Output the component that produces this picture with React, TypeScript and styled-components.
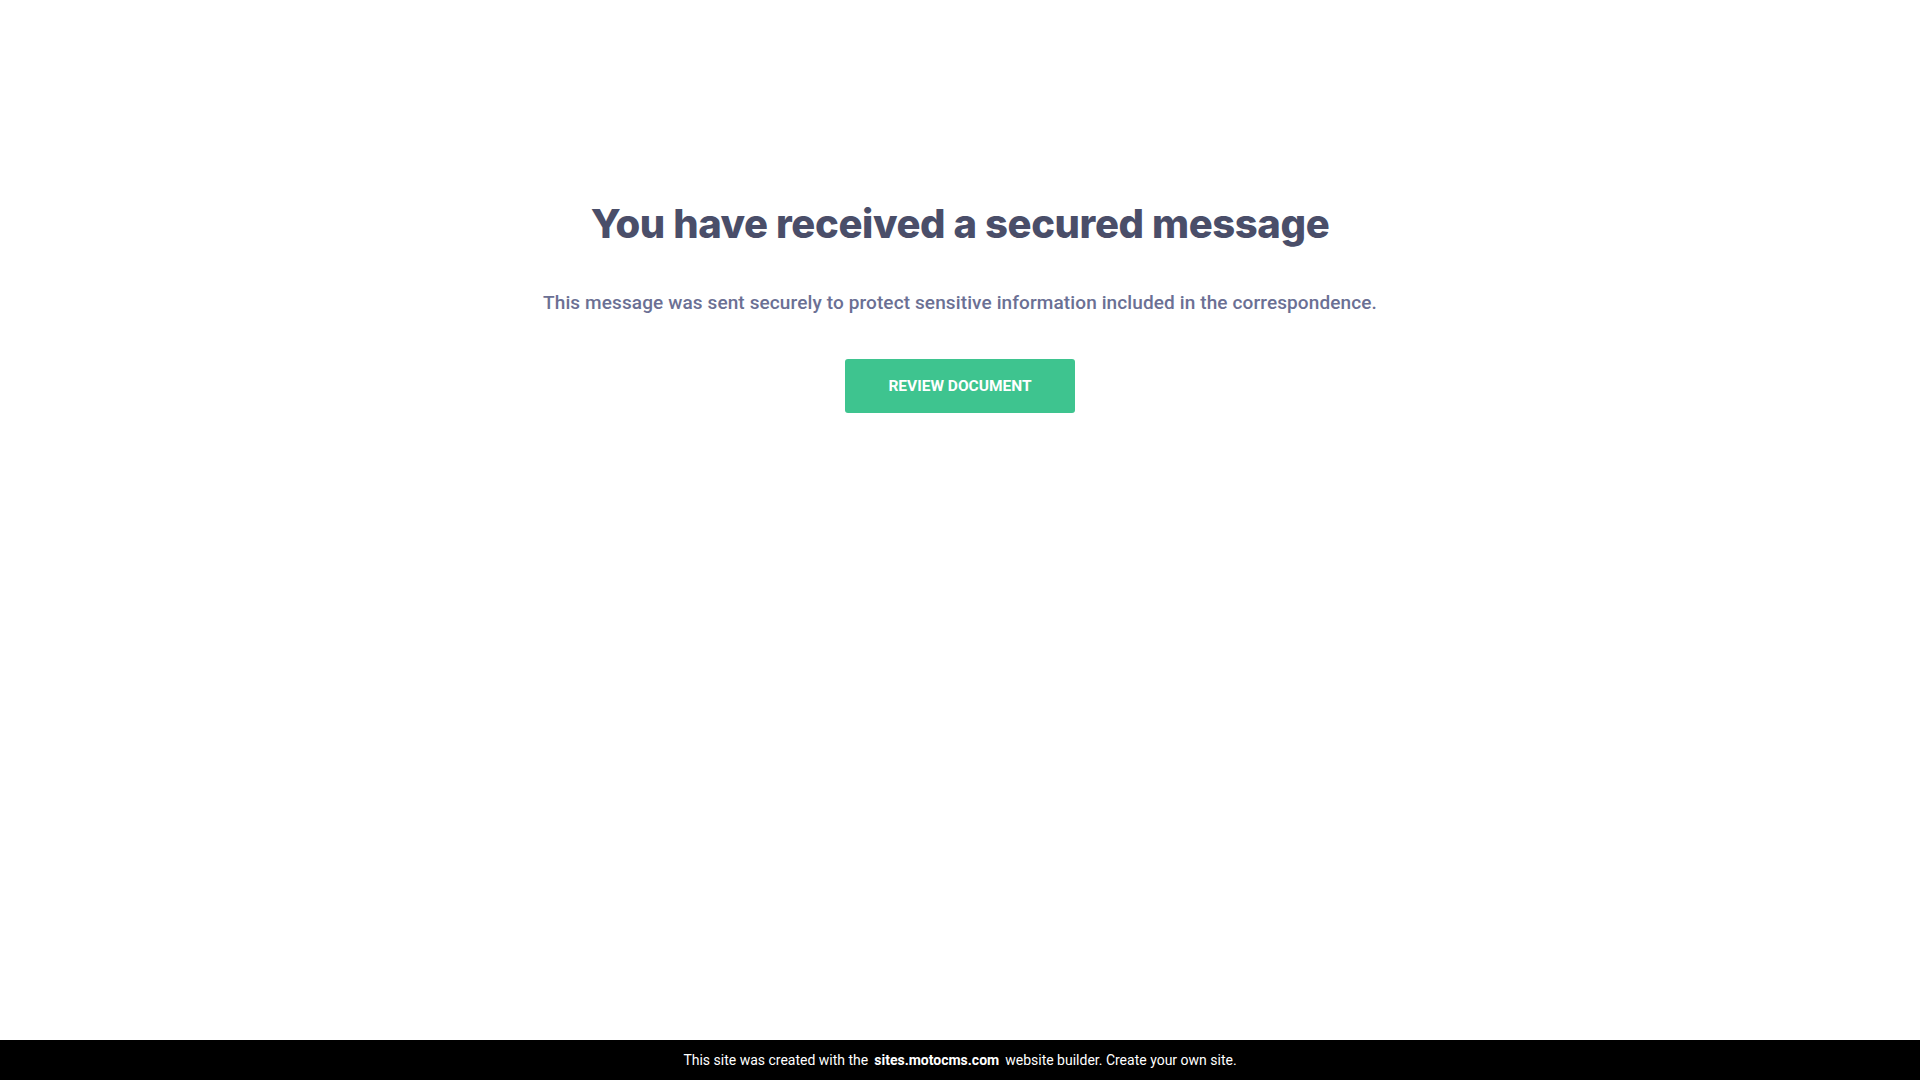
import React from 'react';
import styled, { createGlobalStyle } from 'styled-components';

const GlobalStyle = createGlobalStyle`
  html, body {
    margin: 0;
    padding: 0;
    height: 100%;
    background: #ffffff;
  }
  #root {
    min-height: 100vh;
    display: flex;
    flex-direction: column;
  }
`;

const Page = styled.div`
  flex: 1;
  display: flex;
  flex-direction: column;
  min-height: 100vh;
`;

const Main = styled.main`
  flex: 1;
  display: flex;
  flex-direction: column;
  align-items: center;
  padding-top: 194px;
  box-sizing: border-box;
`;

const Title = styled.h1`
  margin: 0;
  color: #4a4e69;
  font-family: 'Inter', 'Roboto', sans-serif;
  font-size: 40px;
  font-weight: 800;
  line-height: 60px;
  letter-spacing: -0.01em;
  text-align: center;
`;

const Lead = styled.p`
  margin: 35px 0 0 0;
  color: #6b7094;
  font-family: 'Roboto', sans-serif;
  font-size: 19px;
  font-weight: 500;
  line-height: 28px;
  letter-spacing: 0.006em;
  text-align: center;
`;

const ActionButton = styled.a`
  margin-top: 42px;
  display: inline-flex;
  align-items: center;
  justify-content: center;
  width: 230px;
  height: 54px;
  background: #3ec48f;
  color: #ffffff;
  border-radius: 3px;
  font-family: 'Roboto', sans-serif;
  font-size: 15.5px;
  font-weight: 700;
  text-transform: uppercase;
  text-decoration: none;
  cursor: pointer;
`;

const Footer = styled.footer`
  height: 40px;
  background: #000000;
  display: flex;
  align-items: center;
  justify-content: center;
  color: #ffffff;
  font-family: 'Roboto', sans-serif;
  font-size: 14px;
`;

const FooterLink = styled.a`
  color: #ffffff;
  font-weight: 700;
  text-decoration: none;
  margin: 0 6px;
`;

const App: React.FC = () => {
  return (
    <>
      <GlobalStyle />
      <Page>
        <Main>
          <Title>You have received a secured message</Title>
          <Lead>This message was sent securely to protect sensitive information included in the correspondence.</Lead>
          <ActionButton>Review document</ActionButton>
        </Main>
        <Footer>
          This site was created with the
          <FooterLink>sites.motocms.com</FooterLink>
          website builder. Create your own site.
        </Footer>
      </Page>
    </>
  );
};

export default App;
